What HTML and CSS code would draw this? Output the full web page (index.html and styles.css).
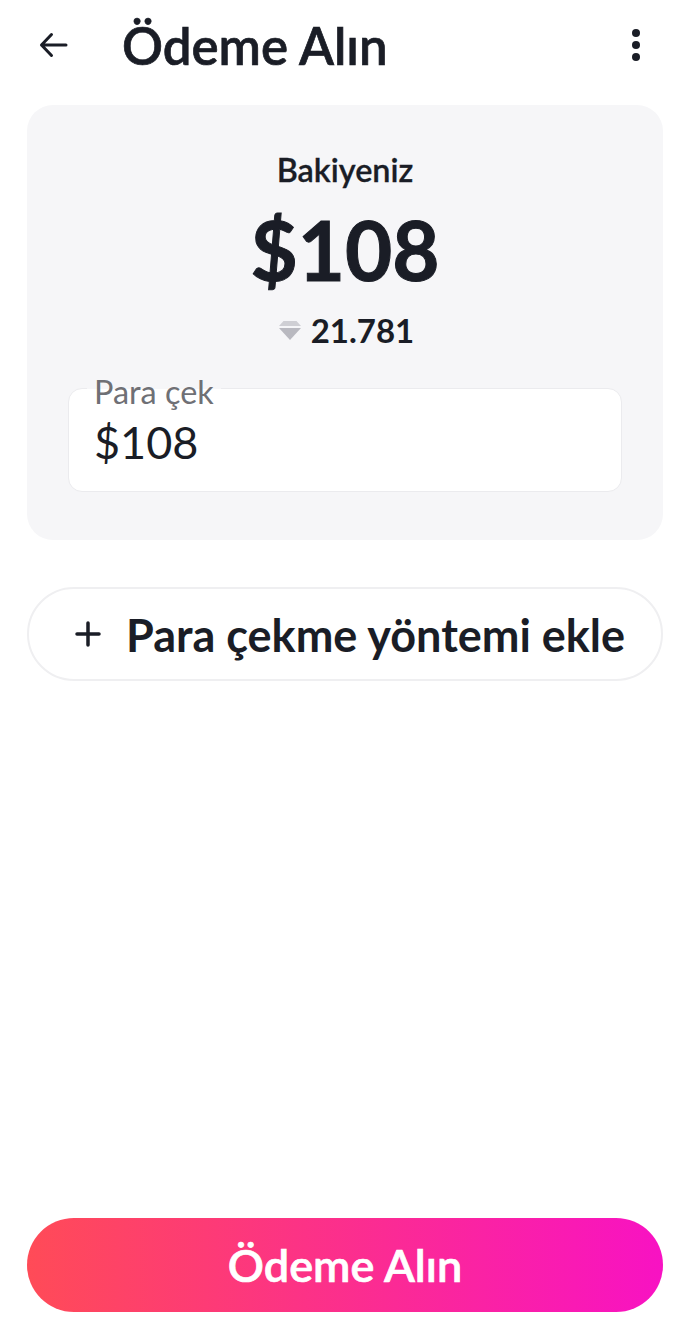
FILE: index.html
```html
<!DOCTYPE html>
<html>
<head>
    <title>Ödeme Alın</title>
    <link rel="stylesheet" href="styles.css">
</head>
<body>
    <div class="page">
        <div class="topbar">
            <svg class="back-icon" width="32" height="28" viewBox="0 0 32 28">
                <path d="M28 14H3.5M13.5 3.5 3.5 14 13.5 24.5" fill="none" stroke="#1a1d26" stroke-width="3" stroke-linecap="round" stroke-linejoin="round"/>
            </svg>
            <h1 class="title">Ödeme Alın</h1>
            <svg class="more-icon" width="10" height="34" viewBox="0 0 10 34">
                <circle cx="5" cy="5" r="4" fill="#1a1d26"/>
                <circle cx="5" cy="17" r="4" fill="#1a1d26"/>
                <circle cx="5" cy="29" r="4" fill="#1a1d26"/>
            </svg>
        </div>

        <div class="balance-card">
            <div class="balance-label">Bakiyeniz</div>
            <div class="balance-amount">$108</div>
            <div class="diamonds">
                <svg width="22" height="19" viewBox="0 0 22 19">
                    <path d="M4.5 0h13L22 5H0z" fill="#cfcfd4"/>
                    <path d="M0 7h22L11 19z" fill="#b9b9c0"/>
                </svg>
                <span>21.781</span>
            </div>
            <div class="withdraw-field">
                <span class="withdraw-label">Para çek</span>
                <span class="withdraw-value">$108</span>
            </div>
        </div>

        <a href="#" class="add-method">
            <svg width="26" height="26" viewBox="0 0 26 26">
                <path d="M13 2v22M2 13h22" fill="none" stroke="#1a1d26" stroke-width="3.5" stroke-linecap="round"/>
            </svg>
            <span>Para çekme yöntemi ekle</span>
        </a>

        <a href="#" class="submit-button">Ödeme Alın</a>
    </div>
</body>
</html>
```

FILE: styles.css
```css
* {
    box-sizing: border-box;
}

body {
    margin: 0;
    font-family: Lato, "Noto Sans", sans-serif;
    color: #1a1d26;
    background-color: #fff;
}

.page {
    display: flex;
    flex-direction: column;
    height: 1320px;
    padding: 0 27px 8px;
}

.topbar {
    display: flex;
    align-items: center;
    height: 105px;
    padding: 0 22px 16px 11px;
}

.back-icon {
    flex-shrink: 0;
}

.title {
    flex-grow: 1;
    margin: 2px 0 0 52px;
    font-size: 51px;
    font-weight: 600;
    -webkit-text-stroke: 0.7px #1a1d26;
}

.balance-card {
    display: flex;
    flex-direction: column;
    align-items: center;
    height: 435px;
    padding: 47px 41px 0;
    background-color: #f6f6f8;
    border-radius: 26px;
}

.balance-label {
    font-size: 32.4px;
    font-weight: 600;
    line-height: 36px;
    -webkit-text-stroke: 0.3px #1a1d26;
}

.balance-amount {
    margin-top: 12px;
    font-size: 81.5px;
    font-weight: 700;
    line-height: 100px;
    -webkit-text-stroke: 1px #1a1d26;
}

.diamonds {
    display: flex;
    align-items: center;
    gap: 10px;
    margin-top: 10px;
    margin-left: 3px;
    font-size: 33px;
    font-weight: 700;
    line-height: 40px;
}

.withdraw-field {
    position: relative;
    width: 100%;
    height: 104px;
    margin-top: 38px;
    padding: 27px 25px 0;
    background-color: #fff;
    border: 1px solid #ebebee;
    border-radius: 14px;
}

.withdraw-label {
    position: absolute;
    top: -15px;
    left: 18px;
    padding: 0 7px;
    font-size: 32.4px;
    line-height: 36px;
    color: #6f7075;
    background: linear-gradient(to bottom, #f6f6f8 15px, #fff 15px);
}

.withdraw-value {
    font-size: 45px;
    line-height: 52px;
}

.add-method {
    display: flex;
    align-items: center;
    gap: 25px;
    height: 94px;
    margin-top: 47px;
    padding-left: 46px;
    font-size: 45px;
    font-weight: 700;
    color: #1a1d26;
    text-decoration: none;
    border: 2px solid #efeff1;
    border-radius: 47px;
}

.add-method span {
    padding-top: 1px;
}

.submit-button {
    display: flex;
    justify-content: center;
    align-items: center;
    height: 94px;
    margin-top: auto;
    font-size: 45px;
    font-weight: 600;
    color: #fff;
    text-decoration: none;
    background: linear-gradient(to right, #ff4b57, #f812c3);
    border-radius: 47px;
    -webkit-text-stroke: 0.7px #fff;
}
```
